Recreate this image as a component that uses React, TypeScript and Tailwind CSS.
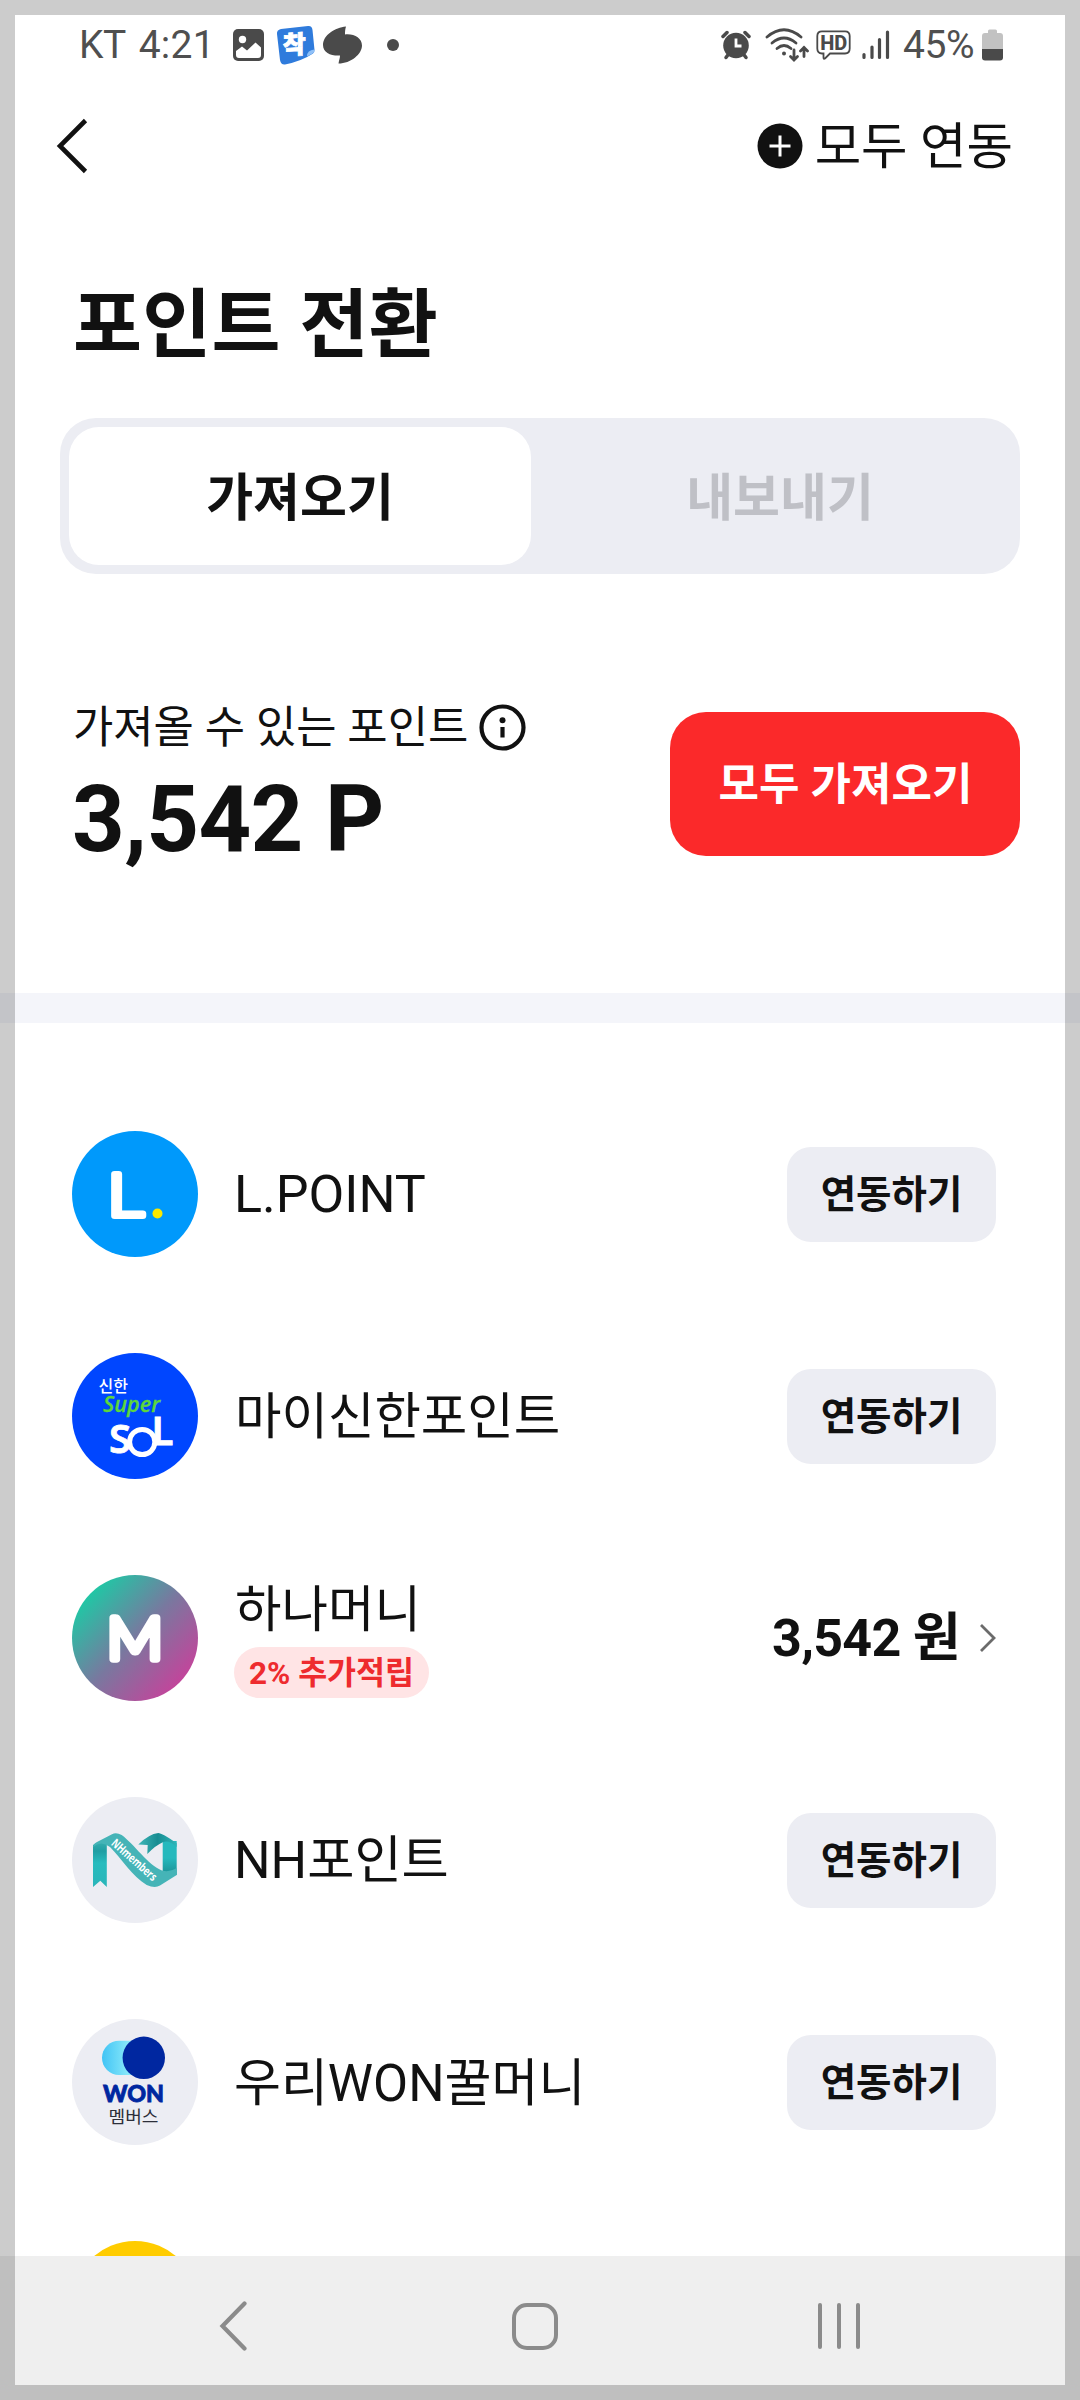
import type { ReactNode } from "react";

const PictureIcon = () => (
  <svg width="31" height="32" viewBox="0 0 31 32">
    <rect width="31" height="32" rx="5" fill="#4a4a4a" />
    <circle cx="9.5" cy="10.5" r="3.7" fill="#fff" />
    <path d="M3 22 L9 17.5 L14 21.5 L22.5 13.5 L28 18.5 V26 Q28 29 25 29 H6 Q3 29 3 26 Z" fill="#fff" />
  </svg>
);

const StickerIcon = () => (
  <svg width="39" height="40" viewBox="0 0 39 40">
    <path d="M5 4 L32 1 Q36 0.5 36.5 5 L38.5 25 Q38.500 27 37 28.500 Q26 36 9 39.500 Q5 40 4 35 L1 9 Q0.500 5 5 4Z" fill="#2f7bdc" />
    <path d="M38.300 24.500 Q31 25 31 31.500 Q36 29.500 38.300 27Z" fill="#8fc0f7" />
    <text x="19.500" y="28.500" textAnchor="middle" fontSize="25" fontWeight="900" fill="#fff" stroke="#fff" strokeWidth="0.8" transform="rotate(-4 19.5 20) skewX(-4)">착</text>
  </svg>
);

const SwirlIcon = () => (
  <svg width="39" height="38" viewBox="0 0 39 38">
    <path d="M23 0.500 C22 3.500 22 6 22 8.500 C31 7.500 39 12 39 19.500 C39 28 28 37.500 15.500 37.500 C16 34.500 17 32 17 29.500 C8 30 0 27 0 19 C0 9 12 1.500 23 0.500Z" fill="#4a4a4a" />
  </svg>
);

const AlarmIcon = () => (
  <svg width="30" height="30" viewBox="0 0 30 30">
    <g stroke="#4a4a4a" strokeLinecap="round" strokeWidth="3.500">
      <path d="M2 6.500 L6 2.500 M28 6.500 L24 2.500" />
      <path d="M5 27.500 L8 23.500 M25 27.500 L22 23.500" />
    </g>
    <circle cx="15" cy="15.500" r="12.800" fill="#4a4a4a" />
    <path d="M15 8.500 V16 H20.500" stroke="#fff" strokeWidth="2.800" fill="none" />
  </svg>
);

const WifiIcon = () => (
  <svg width="44" height="34" viewBox="0 0 44 34" fill="none" stroke="#4a4a4a" strokeWidth="2.800" strokeLinecap="round">
    <path d="M2 9 Q19 -5.500 36 9" />
    <path d="M7 15 Q19 5 31 15" />
    <path d="M12 20.500 Q19 14.500 26 20.500" />
    <circle cx="19" cy="25.500" r="2" fill="#4a4a4a" stroke="none" />
    <path d="M29 22 V31 M25.500 28.500 L29 32 L32.500 28.500" />
    <path d="M39 28.500 V19.500 M35.500 23 L39 19.500 L42.500 23" />
  </svg>
);

const HdIcon = () => (
  <svg width="35" height="31" viewBox="0 0 35 31">
    <path d="M6 1.300 H29 Q33.700 1.300 33.700 6 V18.500 Q33.700 23.500 29 23.500 H14 L9 28.500 Q7.500 29.500 7.500 27.500 V23.500 H6 Q1.300 23.500 1.300 18.500 V6 Q1.300 1.300 6 1.300Z" fill="none" stroke="#4a4a4a" strokeWidth="1.800" />
    <text x="17.700" y="19.500" textAnchor="middle" fontSize="20" fontWeight="800" fill="#4a4a4a" textLength="27" lengthAdjust="spacingAndGlyphs">HD</text>
  </svg>
);

const SignalIcon = () => (
  <svg width="28" height="30" viewBox="0 0 28 30" stroke="#4a4a4a" strokeWidth="3.200" strokeLinecap="round">
    <path d="M2 24.500 V27.500 M10 17 V27.500 M17.500 9.500 V27.500 M25.500 2 V27.500" />
  </svg>
);

const BatteryIcon = () => (
  <svg width="21" height="32" viewBox="0 0 21 32">
    <path d="M6 2 Q6 0.500 7.500 0.500 H13.500 Q15 0.500 15 2 V4 H18 Q21 4 21 7 V20 H0 V7 Q0 4 3 4 H6Z" fill="#c2c2c2" />
    <path d="M0 20 H21 V28.500 Q21 31.500 18 31.500 H3 Q0 31.500 0 28.500Z" fill="#4a4a4a" />
  </svg>
);

const LPointLogo = () => (
  <svg width="126" height="126" viewBox="0 0 126 126">
    <circle cx="63" cy="63" r="63" fill="#0099fb" />
    <text transform="translate(35.200 85) scale(1.2 1)" fontSize="60" fontWeight="300" fill="#fff" stroke="#fff" strokeWidth="6" strokeLinejoin="round" className="font-['Lato']">L</text>
    <circle cx="85.500" cy="82.500" r="5" fill="#fbe800" />
  </svg>
);

const SolLogo = () => (
  <svg width="126" height="126" viewBox="0 0 126 126">
    <circle cx="63" cy="63" r="63" fill="#0046ff" />
    <text x="26.500" y="38.500" fontSize="16" fontWeight="500" fill="#fff">신한</text>
    <text x="31" y="58.500" fontSize="21.500" fontWeight="600" fontStyle="italic" fill="#5cd63c" stroke="#5cd63c" strokeWidth="0.3" textLength="57" lengthAdjust="spacingAndGlyphs" className="font-['Open_Sans']">Super</text>
    <text fontSize="40" fontWeight="600" fill="#fff" stroke="#fff" strokeWidth="0.8" className="font-['Noto_Sans']">
      <tspan x="37" y="99.500">S</tspan>
      <tspan x="79.500" y="92">L</tspan>
    </text>
    <circle cx="70.200" cy="89" r="12.600" fill="#0046ff" stroke="#fff" strokeWidth="5" />
  </svg>
);

const HanaLogo = () => (
  <svg width="126" height="126" viewBox="0 0 126 126">
    <defs>
      <linearGradient id="hana" x1="0.1" y1="0.18" x2="0.85" y2="0.88">
        <stop offset="0" stopColor="#1fc8a5" />
        <stop offset="0.5" stopColor="#79789f" />
        <stop offset="1" stopColor="#c4449b" />
      </linearGradient>
    </defs>
    <circle cx="63" cy="63" r="63" fill="url(#hana)" />
    <text transform="translate(63 84) scale(1.06 1)" textAnchor="middle" fontSize="58" fontWeight="300" fill="#fff" stroke="#fff" strokeWidth="7.500" strokeLinejoin="round" className="font-['Lato']">M</text>
  </svg>
);

const NhLogo = () => (
  <svg width="126" height="126" viewBox="0 0 126 126">
    <defs>
      <linearGradient id="nhLeg" x1="0" y1="0" x2="0" y2="1">
        <stop offset="0" stopColor="#3fb3b3" />
        <stop offset="0.25" stopColor="#1f9ea3" />
        <stop offset="0.5" stopColor="#27bcbe" />
        <stop offset="1" stopColor="#2ab5b9" />
      </linearGradient>
      <linearGradient id="nhRight" x1="0" y1="0" x2="0" y2="1">
        <stop offset="0" stopColor="#25b9bd" />
        <stop offset="0.5" stopColor="#25b9bd" />
        <stop offset="1" stopColor="#1a8f94" />
      </linearGradient>
      <linearGradient id="nhFold" x1="0" y1="0" x2="1" y2="0">
        <stop offset="0" stopColor="#3fb7b8" />
        <stop offset="0.5" stopColor="#178d92" />
        <stop offset="1" stopColor="#2fb5b8" />
      </linearGradient>
    </defs>
    <circle cx="63" cy="63" r="63" fill="#ecedf3" />
    <path d="M90.700 44 H104.700 V78 L90.700 76Z" fill="url(#nhRight)" />
    <path d="M66.300 47.500 Q77 37 86.300 36 Q90 36 104.700 46.300 V50 Q97 43 91.300 45 Q84 48 75.300 57 L75.700 48Z" fill="url(#nhFold)" />
    <path d="M21 48 Q26 44 38 42 L34.800 48 V90 L28.300 83.700 L21 90Z" fill="url(#nhLeg)" />
    <path d="M21 50 Q21.500 46.500 25 45 L40 37.300 Q44 35 49.700 38 C62 47 76 68 90 73.500 Q97 76 104.700 71 V78 L88 88.500 Q83 91.500 74.700 88 C60 79 50 62 38 50 Q29 43 21 50Z" fill="#45b4b7" />
    <text transform="translate(38.500 47.500) rotate(41.500)" fontSize="12" fontWeight="700" fill="#fff" textLength="56" lengthAdjust="spacingAndGlyphs" className="font-['Open_Sans']">NHmembers</text>
  </svg>
);

const WonLogo = () => (
  <svg width="126" height="126" viewBox="0 0 126 126">
    <defs>
      <linearGradient id="won" x1="0" y1="0" x2="1" y2="0">
        <stop offset="0" stopColor="#41c4f5" />
        <stop offset="0.6" stopColor="#8beaf9" />
      </linearGradient>
    </defs>
    <circle cx="63" cy="63" r="63" fill="#ecedf3" />
    <rect x="30" y="21.700" width="46" height="34.300" rx="17.100" fill="url(#won)" />
    <circle cx="71.800" cy="38.800" r="21.200" fill="#0027a0" />
    <text x="61.500" y="82.500" textAnchor="middle" fontSize="22.500" fontWeight="900" fill="#0027a0" stroke="#0027a0" strokeWidth="0.8" textLength="61" lengthAdjust="spacingAndGlyphs" className="font-['Lato']">WON</text>
    <text x="61.500" y="103.500" textAnchor="middle" fontSize="17" fontWeight="400" fill="#2c2f3a" textLength="50" lengthAdjust="spacingAndGlyphs">멤버스</text>
  </svg>
);

const LinkButton = () => (
  <button className="flex h-[95px] w-[209px] items-center justify-center rounded-[24px] bg-[#ecedf3] text-[38.5px] leading-none font-bold">
    <span className="relative top-px">연동하기</span>
  </button>
);

type RowProps = { logo: ReactNode; name?: ReactNode; action?: ReactNode };

const Row = ({ logo, name, action }: RowProps) => (
  <li className="flex h-[222px] shrink-0 items-center pr-[84px] pl-[72px]">
    {logo}
    <div className="ml-[37px] flex flex-1 flex-col items-start pt-[2px] text-[50.5px] leading-none">{name}</div>
    {action}
  </li>
);

export default function App() {
  return (
    <div className="relative flex h-[2400px] w-[1080px] flex-col overflow-hidden bg-white font-['Roboto','Noto_Sans_CJK_KR',sans-serif] text-[#111]">
      <div className="flex h-[2256px] flex-col overflow-hidden">
        <div className="flex h-[90px] shrink-0 items-center pr-[77px] pl-[79px] text-[39px] leading-none text-[#4f4f4f]">
          <span className="tracking-[-0.5px]">KT</span>
          <span className="ml-[13px] w-[94px] tracking-[0.2px]">4:21</span>
          <PictureIcon />
          <div className="ml-3"><StickerIcon /></div>
          <div className="ml-2"><SwirlIcon /></div>
          <div className="ml-[25px] size-3 rounded-full bg-[#4a4a4a]" />
          <div className="ml-auto"><AlarmIcon /></div>
          <div className="ml-[14px]"><WifiIcon /></div>
          <div className="ml-[7px]"><HdIcon /></div>
          <div className="ml-[11px]"><SignalIcon /></div>
          <span className="ml-[13px] w-[79px] tracking-[-0.4px] whitespace-nowrap">45%</span>
          <BatteryIcon />
        </div>

        <header className="flex h-[111px] shrink-0 items-center justify-between pr-[67px] pl-[56px]">
          <svg width="32" height="56" viewBox="0 0 32 56" fill="none" stroke="#111" strokeWidth="4.600">
            <path d="M29.500 2.500 L4 28 L29.500 53.500" />
          </svg>
          <button className="flex items-center text-[50.5px] leading-none">
            <svg width="46" height="46" viewBox="0 0 46 46">
              <circle cx="23" cy="23" r="22.500" fill="#111" />
              <path d="M12.500 23 H33.500 M23 12.500 V33.500" stroke="#fff" strokeWidth="3" />
            </svg>
            <span className="ml-3 pt-1">모두 연동</span>
          </button>
        </header>

        <h1 className="mt-[87px] ml-[73px] shrink-0 text-[75px] leading-none font-bold tracking-[0.2px]">포인트 전환</h1>

        <div className="mx-[60px] mt-[55px] flex h-[156px] shrink-0 rounded-[36px] bg-[#ecedf3] p-[9px] text-[51px] leading-none font-bold">
          <button className="flex w-[462px] items-center justify-center rounded-[30px] bg-white pt-[4px]">가져오기</button>
          <button className="flex flex-1 items-center justify-center pt-[4px] pl-[18px] text-[#bfc0c6]">내보내기</button>
        </div>

        <section className="flex h-[419px] shrink-0 items-start justify-between pt-[126px] pr-[60px] pl-[73px]">
          <div>
            <div className="flex h-[54px] items-center text-[43.8px] leading-none">
              <span className="pt-[3px]">가져올 수 있는 포인트</span>
              <svg className="ml-[11px]" width="47" height="47" viewBox="0 0 47 47">
                <circle cx="23.500" cy="23.500" r="21" fill="none" stroke="#111" strokeWidth="4.200" />
                <circle cx="23.500" cy="16.300" r="3" fill="#111" />
                <path d="M23.500 23 V33.500" stroke="#111" strokeWidth="4.200" />
              </svg>
            </div>
            <div className="mt-5 -ml-px text-[92px] leading-none font-bold tracking-[-0.6px]">3,542 P</div>
          </div>
          <button className="mt-3 flex h-[144px] w-[350px] items-center justify-center rounded-[36px] bg-[#fb292a] pt-[2px] pl-px text-[44px] leading-none font-bold text-white">
            모두 가져오기
          </button>
        </section>

        <div className="h-[30px] shrink-0 bg-[#f4f5fa]" />

        <ul className="flex flex-col pt-[60px]">
          <Row logo={<LPointLogo />} name={<span className="-ml-px text-[52px]">L.POINT</span>} action={<LinkButton />} />
          <Row logo={<SolLogo />} name="마이신한포인트" action={<LinkButton />} />
          <Row
            logo={<HanaLogo />}
            name={
              <>
                <span className="mt-[5px]">하나머니</span>
                <span className="mt-[11px] -ml-px flex h-[51px] w-[195px] items-center justify-center rounded-full bg-[#ffe4e5] pt-[2px] text-[31.5px] leading-none font-bold whitespace-nowrap text-[#ee2b2e]">2% 추가적립</span>
              </>
            }
            action={
              <div className="flex items-center text-[52px] leading-none font-bold">
                <span className="pt-[2px] tracking-[-0.7px]">3,542 원</span>
                <svg className="ml-[19px]" width="17" height="30" viewBox="0 0 17 30" fill="none" stroke="#6b6b6b" strokeWidth="2.800">
                  <path d="M2 2 L15 15 L2 28" />
                </svg>
              </div>
            }
          />
          <Row logo={<NhLogo />} name={<span className="-ml-px text-[51.3px]">NH포인트</span>} action={<LinkButton />} />
          <Row logo={<WonLogo />} name={<span className="-ml-px text-[51px]">우리WON꿀머니</span>} action={<LinkButton />} />
          <Row logo={<div className="size-[126px] rounded-full bg-[#ffcc00]" />} />
        </ul>
      </div>

      <nav className="flex h-36 shrink-0 items-center bg-[#efefef] pb-1 pl-[219px]">
        <svg width="30" height="50" viewBox="0 0 30 50" fill="none" stroke="#8b8b8b" strokeWidth="4.200" strokeLinecap="round">
          <path d="M25.500 2.500 L3.500 25 L25.500 47.500" />
        </svg>
        <div className="ml-[263px] h-[47px] w-[46px] rounded-[15px] border-4 border-[#8b8b8b]" />
        <div className="ml-[260px] flex gap-[15px]">
          <div className="h-[46px] w-1 rounded-full bg-[#8b8b8b]" />
          <div className="h-[46px] w-1 rounded-full bg-[#8b8b8b]" />
          <div className="h-[46px] w-1 rounded-full bg-[#8b8b8b]" />
        </div>
      </nav>

      <div className="pointer-events-none absolute inset-0 border-[15px] border-black/20" />
    </div>
  );
}
